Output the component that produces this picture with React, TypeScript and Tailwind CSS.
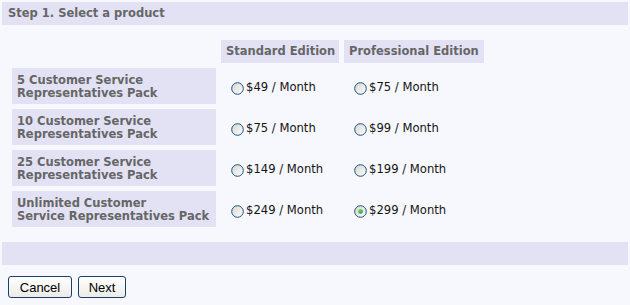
import React from "react";

const rows = [
  { lines: ["5 Customer Service", "Representatives Pack"], std: "$49", pro: "$75" },
  { lines: ["10 Customer Service", "Representatives Pack"], std: "$75", pro: "$99" },
  { lines: ["25 Customer Service", "Representatives Pack"], std: "$149", pro: "$199" },
  { lines: ["Unlimited Customer", "Service Representatives Pack"], std: "$249", pro: "$299" },
];

function Radio({ checked }: { checked?: boolean }) {
  return (
    <svg width="13" height="13" viewBox="0 0 13 13" className="shrink-0">
      <defs>
        <linearGradient id="rg" x1="0" y1="0" x2="1" y2="1">
          <stop offset="0" stopColor="#d4d4cf" />
          <stop offset="1" stopColor="#ffffff" />
        </linearGradient>
        <radialGradient id="dot" cx="0.4" cy="0.4" r="0.6">
          <stop offset="0" stopColor="#6fe36f" />
          <stop offset="1" stopColor="#1a9a1a" />
        </radialGradient>
      </defs>
      <circle cx="6.5" cy="6.5" r="5.8" fill="url(#rg)" stroke="#1c5180" strokeWidth="1" />
      {checked && <circle cx="6.5" cy="6.5" r="2.3" fill="url(#dot)" />}
    </svg>
  );
}

function Price({ value, checked }: { value: string; checked?: boolean }) {
  return (
    <div className="flex items-center pl-[10px] pt-[4px]">
      <Radio checked={checked} />
      <span className="ml-[2px] whitespace-nowrap text-[11.6px] text-[#141414]">{value} / Month</span>
    </div>
  );
}

export default function App() {
  return (
    <div className="w-[630px] h-[305px] bg-[#f7f7fe] p-[2px] font-['DejaVu_Sans',Verdana,sans-serif]">
      <div className="h-[23px] bg-[#e3e2f4] flex items-center px-[6px] pt-[1px] text-[11.5px] font-bold text-[#666]">
        Step 1. Select a product
      </div>
      <div className="mt-[15px] ml-[10px] grid grid-cols-[204px_118px_140px] auto-rows-[36px] grid-rows-[23px] gap-[5px]">
        <div />
        <div className="bg-[#e3e2f4] flex items-center pl-[5px] pt-[1px] whitespace-nowrap text-[11.5px] font-bold text-[#666]">Standard Edition</div>
        <div className="bg-[#e3e2f4] flex items-center pl-[5px] pt-[1px] whitespace-nowrap text-[11.5px] font-bold text-[#666]">Professional Edition</div>
        {rows.map((r, i) => (
          <React.Fragment key={i}>
            <div className="bg-[#e3e2f4] flex flex-col justify-center px-[5px] pt-[1px] whitespace-nowrap text-[11.5px] leading-[13px] font-bold text-[#666]">
              <span>{r.lines[0]}</span>
              <span>{r.lines[1]}</span>
            </div>
            <Price value={r.std} />
            <Price value={r.pro} checked={i === 3} />
          </React.Fragment>
        ))}
      </div>
      <div className="mt-[15px] h-[23px] bg-[#e3e2f4]" />
      <div className="mt-[11px] ml-[6px] flex gap-[6px] font-['Liberation_Sans',Arial,sans-serif] text-[13px] text-black">
        <button className="w-[64px] h-[22px] rounded-[3px] border border-[#1c3f6e] bg-gradient-to-b from-[#ffffff] to-[#ecebe6] leading-none">
          Cancel
        </button>
        <button className="w-[48px] h-[22px] rounded-[3px] border border-[#1c3f6e] bg-gradient-to-b from-[#ffffff] to-[#ecebe6] leading-none">
          Next
        </button>
      </div>
    </div>
  );
}
